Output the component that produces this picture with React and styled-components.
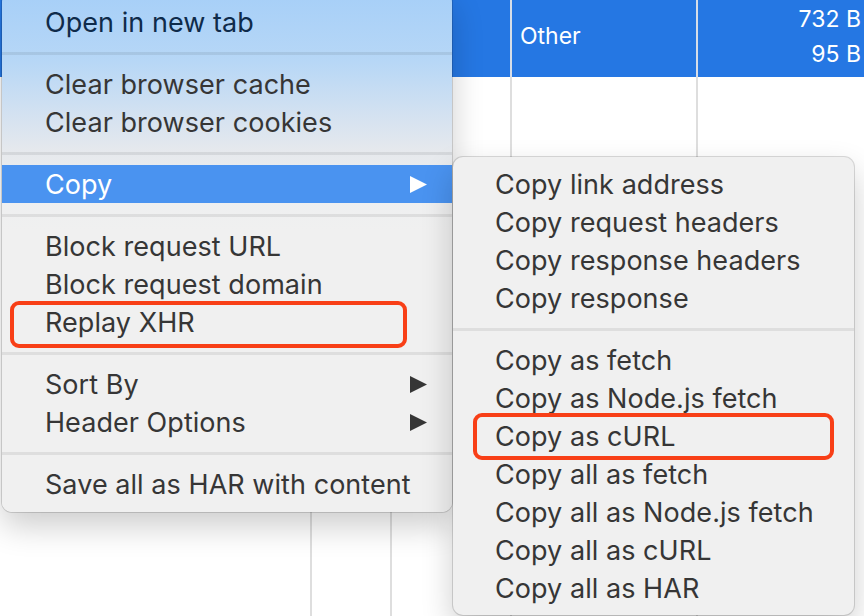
import React from 'react';
import styled, { createGlobalStyle } from 'styled-components';

const GlobalStyle = createGlobalStyle`
  html, body {
    margin: 0;
    padding: 0;
    background: #ffffff;
  }
  body {
    font-family: Inter, "Liberation Sans", sans-serif;
  }
`;

const Page = styled.div`
  position: relative;
  width: 864px;
  height: 616px;
  overflow: hidden;
  background: #ffffff;
`;

/* network table behind the menus */
const Table = styled.div`
  display: grid;
  grid-template-columns: 310px 80px 120px 186px 1fr;
  grid-template-rows: 77px 1fr;
  height: 100%;
`;

const Cell = styled.div`
  display: flex;
  flex-direction: column;
  justify-content: center;
  align-items: ${p => (p.$right ? 'flex-end' : 'flex-start')};
  gap: 12px;
  padding: 0 3px 4px 8px;
  background: ${p => (p.$selected ? '#2577e3' : '#ffffff')};
  border-left: ${p => (p.$first ? 'none' : p.$selected ? '2px solid #d6dde8' : '2px solid #dedede')};
  color: #ffffff;
  font-size: 23px;
  line-height: 1;
`;

const Menu = styled.div`
  position: absolute;
  left: ${p => p.$left}px;
  top: ${p => p.$top}px;
  width: ${p => p.$width}px;
  padding: ${p => p.$padding};
  border-radius: 10px;
  background: ${p => p.$tinted
    ? 'linear-gradient(to bottom, #a6cff8 0px, #b7d7f6 70px, #d2e1f1 120px, #e6e9ed 160px, #eeeff0 200px, #f0f0f0 240px)'
    : '#f0f0f0'};
  box-shadow: 0 0 0 1px rgba(0, 0, 0, 0.14), 0 14px 32px rgba(0, 0, 0, 0.2);
`;

const Item = styled.div`
  display: flex;
  align-items: center;
  justify-content: space-between;
  height: 38px;
  padding: 0 25px 0 ${p => p.$indent}px;
  font-size: 27px;
  letter-spacing: 0.05px;
  color: ${p => (p.$active ? '#ffffff' : p.$top ? '#0f2b4a' : '#363636')};
  background: ${p => (p.$active ? '#4a93f0' : 'transparent')};
  white-space: nowrap;
`;

const Separator = styled.div`
  height: 24px;
  display: flex;
  align-items: center;

  &::after {
    content: '';
    flex: 1;
    height: 3px;
    background: rgba(0, 0, 0, 0.075);
  }
`;

const Highlight = styled.div`
  position: absolute;
  left: ${p => p.$left}px;
  top: ${p => p.$top}px;
  width: ${p => p.$width}px;
  height: 47px;
  box-sizing: border-box;
  border: 4px solid #f83f17;
  border-radius: 9px;
`;

const Arrow = ({ color }) => (
  <svg width="17" height="17" viewBox="0 0 17 17">
    <polygon points="0,0 17,8.5 0,17" fill={color} />
  </svg>
);

const mainItems = [
  { label: 'Open in new tab', top: true },
  'sep',
  { label: 'Clear browser cache' },
  { label: 'Clear browser cookies' },
  'sep',
  { label: 'Copy', active: true, sub: true },
  'sep',
  { label: 'Block request URL' },
  { label: 'Block request domain' },
  { label: 'Replay XHR' },
  'sep',
  { label: 'Sort By', sub: true },
  { label: 'Header Options', sub: true },
  'sep',
  { label: 'Save all as HAR with content' },
];

const copyItems = [
  'Copy link address',
  'Copy request headers',
  'Copy response headers',
  'Copy response',
  'sep',
  'Copy as fetch',
  'Copy as Node.js fetch',
  'Copy as cURL',
  'Copy all as fetch',
  'Copy all as Node.js fetch',
  'Copy all as cURL',
  'Copy all as HAR',
];

export default function App() {
  return (
    <Page>
      <GlobalStyle />
      <Table>
        <Cell $selected $first />
        <Cell $selected />
        <Cell $selected />
        <Cell $selected>Other</Cell>
        <Cell $selected $right>
          <span>732 B</span>
          <span>95 B</span>
        </Cell>
        <Cell $first />
        <Cell />
        <Cell />
        <Cell />
        <Cell />
      </Table>

      <Menu $left={2} $top={-8} $width={450} $padding="11px 0 9px" $tinted>
        {mainItems.map((item, i) =>
          item === 'sep' ? (
            <Separator key={i} />
          ) : (
            <Item key={i} $indent={43} $active={item.active} $top={item.top}>
              <span>{item.label}</span>
              {item.sub && <Arrow color={item.active ? '#ffffff' : '#363636'} />}
            </Item>
          )
        )}
      </Menu>

      <Menu $left={453} $top={157} $width={401} $padding="8px 0">
        {copyItems.map((label, i) =>
          label === 'sep' ? (
            <Separator key={i} />
          ) : (
            <Item key={i} $indent={42}>
              <span>{label}</span>
            </Item>
          )
        )}
      </Menu>

      <Highlight $left={10} $top={301} $width={397} />
      <Highlight $left={473} $top={413} $width={361} />
    </Page>
  );
}
